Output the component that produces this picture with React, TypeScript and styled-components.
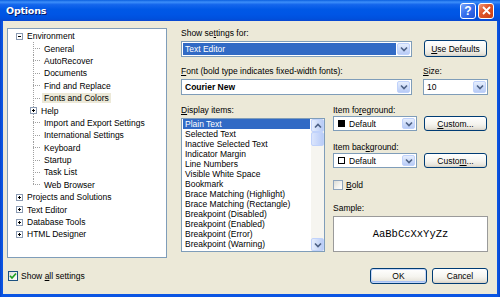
import React from "react";
import styled, { createGlobalStyle } from "styled-components";

const GlobalStyle = createGlobalStyle`
  html, body {
    margin: 0;
    padding: 0;
    background: #ffffff;
  }
  body {
    font-family: "Liberation Sans", Arial, sans-serif;
    font-size: 8.5px;
    color: #000;
  }
`;

// tree content
type TreeItem = {
  label: string;
  level: 0 | 1;
  expander?: "plus" | "minus";
  selected?: boolean;
  last?: boolean;
};

const treeItems: TreeItem[] = [
  { label: "Environment", level: 0, expander: "minus" },
  { label: "General", level: 1 },
  { label: "AutoRecover", level: 1 },
  { label: "Documents", level: 1 },
  { label: "Find and Replace", level: 1 },
  { label: "Fonts and Colors", level: 1, selected: true },
  { label: "Help", level: 1, expander: "plus" },
  { label: "Import and Export Settings", level: 1 },
  { label: "International Settings", level: 1 },
  { label: "Keyboard", level: 1 },
  { label: "Startup", level: 1 },
  { label: "Task List", level: 1 },
  { label: "Web Browser", level: 1, last: true },
  { label: "Projects and Solutions", level: 0, expander: "plus" },
  { label: "Text Editor", level: 0, expander: "plus" },
  { label: "Database Tools", level: 0, expander: "plus" },
  { label: "HTML Designer", level: 0, expander: "plus" },
];

const displayItems = [
  "Plain Text",
  "Selected Text",
  "Inactive Selected Text",
  "Indicator Margin",
  "Line Numbers",
  "Visible White Space",
  "Bookmark",
  "Brace Matching (Highlight)",
  "Brace Matching (Rectangle)",
  "Breakpoint (Disabled)",
  "Breakpoint (Enabled)",
  "Breakpoint (Error)",
  "Breakpoint (Warning)",
];

function Expander({ kind }: { kind: "plus" | "minus" }) {
  return (
    <ExpanderBox width="7" height="7" viewBox="0 0 7 7">
      <rect x="0.5" y="0.5" width="6" height="6" fill="#fff" stroke="#8b9bb3" />
      <path d="M2 3.5h3" stroke="#000" />
      {kind === "plus" && <path d="M3.5 2v3" stroke="#000" />}
    </ExpanderBox>
  );
}

function Chevron({ up }: { up?: boolean }) {
  return (
    <svg width="8" height="6" viewBox="0 0 8 6">
      <path
        d={up ? "M1 4.5 L4 1.5 L7 4.5" : "M1 1.5 L4 4.5 L7 1.5"}
        fill="none"
        stroke="#4d6185"
        strokeWidth="1.6"
      />
    </svg>
  );
}

function ComboBox({
  width,
  height,
  children,
  highlighted,
}: {
  width: number;
  height: number;
  children: React.ReactNode;
  highlighted?: boolean;
}) {
  return (
    <Combo $width={width} $height={height}>
      <ComboValue $highlighted={highlighted}>{children}</ComboValue>
      <DropButton>
        <Chevron />
      </DropButton>
    </Combo>
  );
}

export default function App() {
  return (
    <>
      <GlobalStyle />
      <Window>
        <TitleBar>
          <TitleText>Options</TitleText>
          <CaptionButton $variant="help">?</CaptionButton>
          <CaptionButton $variant="close">
            <svg width="9" height="9" viewBox="0 0 9 9">
              <path d="M1 1 L8 8 M8 1 L1 8" stroke="#fff" strokeWidth="1.8" />
            </svg>
          </CaptionButton>
        </TitleBar>

        <Body>
          <Main>
            <Tree>
              {treeItems.map((item) => (
                <TreeRow key={item.label} $level={item.level} $last={item.last}>
                  {item.expander ? (
                    <Expander kind={item.expander} />
                  ) : (
                    <Connector />
                  )}
                  <TreeLabel $selected={item.selected}>{item.label}</TreeLabel>
                </TreeRow>
              ))}
            </Tree>

            <RightPanel>
              <Row>
                <Field>
                  <Label>
                    Show se<u>t</u>tings for:
                  </Label>
                  <ComboBox width={231} height={16} highlighted>
                    Text Editor
                  </ComboBox>
                </Field>
                <PushButton $width={63} $height={17} $gap={12}>
                  <u>U</u>se Defaults
                </PushButton>
              </Row>

              <Row $top={9}>
                <Field>
                  <Label>
                    <u>F</u>ont (bold type indicates fixed-width fonts):
                  </Label>
                  <ComboBox width={231} height={16}>
                    <b>Courier New</b>
                  </ComboBox>
                </Field>
                <Field $gap={11}>
                  <Label>
                    <u>S</u>ize:
                  </Label>
                  <ComboBox width={65} height={16}>
                    10
                  </ComboBox>
                </Field>
              </Row>

              <Row $top={10}>
                <Field>
                  <Label>
                    <u>D</u>isplay items:
                  </Label>
                  <ListBox>
                    <ListItems>
                      {displayItems.map((text, i) => (
                        <ListItem key={text} $selected={i === 0}>
                          {text}
                        </ListItem>
                      ))}
                    </ListItems>
                    <ScrollBar>
                      <ScrollButton>
                        <Chevron up />
                      </ScrollButton>
                      <ScrollThumb />
                      <ScrollTrack />
                      <ScrollButton>
                        <Chevron />
                      </ScrollButton>
                    </ScrollBar>
                  </ListBox>
                </Field>

                <ColorColumn>
                  <Label>
                    Item fo<u>r</u>eground:
                  </Label>
                  <InlineRow>
                    <ComboBox width={84} height={15}>
                      <Swatch $color="#000" />
                      Default
                    </ComboBox>
                    <PushButton $width={63} $height={15} $gap={7}>
                      <u>C</u>ustom...
                    </PushButton>
                  </InlineRow>

                  <Label $top={11}>
                    Item bac<u>k</u>ground:
                  </Label>
                  <InlineRow>
                    <ComboBox width={84} height={15}>
                      <Swatch $color="#fff" />
                      Default
                    </ComboBox>
                    <PushButton $width={63} $height={15} $gap={7}>
                      Custo<u>m</u>...
                    </PushButton>
                  </InlineRow>

                  <CheckRow $top={12}>
                    <CheckBox $pale />
                    <span>
                      <u>B</u>old
                    </span>
                  </CheckRow>

                  <Label $top={13}>Sample:</Label>
                  <SampleBox>AaBbCcXxYyZz</SampleBox>
                </ColorColumn>
              </Row>
            </RightPanel>
          </Main>

          <Footer>
            <CheckRow>
              <CheckBox>
                <svg width="8" height="8" viewBox="0 0 8 8">
                  <path
                    d="M1 3.8 L3 6 L7 1.5"
                    fill="none"
                    stroke="#21a121"
                    strokeWidth="1.7"
                  />
                </svg>
              </CheckBox>
              <span>
                Show <u>a</u>ll settings
              </span>
            </CheckRow>
            <FooterButtons>
              <PushButton $width={57} $height={16} $default>
                OK
              </PushButton>
              <PushButton $width={56} $height={16}>
                Cancel
              </PushButton>
            </FooterButtons>
          </Footer>
        </Body>
      </Window>
    </>
  );
}

const Window = styled.div`
  width: 500px;
  height: 297px;
  display: flex;
  flex-direction: column;
  background: linear-gradient(to right, #0843c9 0, #0a55e3 2px, #0a55e3 calc(100% - 2px), #0843c9 100%);
  box-sizing: border-box;
  overflow: hidden;
`;

const TitleBar = styled.div`
  height: 21px;
  display: flex;
  align-items: center;
  padding: 0 6px 0 6px;
  gap: 2px;
  background: linear-gradient(
    to bottom,
    #0a5fdf 0%,
    #3d8ffa 10%,
    #1466ec 22%,
    #0058e6 45%,
    #0055e5 70%,
    #0050dc 90%,
    #0a46d0 100%
  );
`;

const TitleText = styled.div`
  flex: 1;
  color: #fff;
  font-family: "DejaVu Sans", "Liberation Sans", sans-serif;
  font-weight: bold;
  font-size: 9.5px;
  text-shadow: 1px 1px 0 #0a1e6a;
  letter-spacing: -0.2px;
`;

const CaptionButton = styled.div<{ $variant: "help" | "close" }>`
  width: 14px;
  height: 14px;
  border: 1px solid #fff;
  border-radius: 3px;
  display: flex;
  align-items: center;
  justify-content: center;
  color: #fff;
  font-family: "Liberation Sans", Arial, sans-serif;
  font-weight: bold;
  font-size: 12px;
  background: ${(p) =>
    p.$variant === "close"
      ? "linear-gradient(135deg, #f09678 0%, #e0582c 40%, #c73d12 100%)"
      : "linear-gradient(135deg, #7aa7fb 0%, #3a72ee 45%, #1c52d8 100%)"};
`;

const Body = styled.div`
  flex: 1;
  margin: 0 3px 3px 3px;
  background: #ece9d8;
  padding: 7px 9px 10px 4px;
  display: flex;
  flex-direction: column;
`;

const Main = styled.div`
  display: flex;
  gap: 14px;
  height: 230px;
`;

const Tree = styled.div`
  width: 160px;
  height: 230px;
  box-sizing: border-box;
  border: 1px solid #7f9db9;
  background: #fff;
  padding-top: 1px;
  overflow: hidden;
`;

const TreeRow = styled.div<{ $level: 0 | 1; $last?: boolean }>`
  position: relative;
  height: 12.4px;
  display: flex;
  align-items: center;
  padding-left: ${(p) => (p.$level === 0 ? 8 : 22)}px;

  ${(p) =>
    p.$level === 1 &&
    `
    &::before {
      content: "";
      position: absolute;
      left: 25px;
      top: 0;
      width: 1px;
      height: ${p.$last ? "50%" : "100%"};
      background: repeating-linear-gradient(to bottom, #a0a0a0 0 1px, transparent 1px 2px);
    }
  `}
`;

const ExpanderBox = styled.svg`
  position: relative;
  z-index: 1;
  flex-shrink: 0;
`;

const Connector = styled.div`
  width: 7px;
  height: 1px;
  margin-left: 3px;
  background: repeating-linear-gradient(to right, #a0a0a0 0 1px, transparent 1px 2px);
`;

const TreeLabel = styled.span<{ $selected?: boolean }>`
  margin-left: 2px;
  padding: 0 2px;
  line-height: 10px;
  white-space: nowrap;
  background: ${(p) => (p.$selected ? "#ece9d8" : "transparent")};
`;

const RightPanel = styled.div`
  width: 307px;
  display: flex;
  flex-direction: column;
`;

const Row = styled.div<{ $top?: number }>`
  display: flex;
  align-items: flex-end;
  margin-top: ${(p) => p.$top || 0}px;
`;

const Field = styled.div<{ $gap?: number }>`
  display: flex;
  flex-direction: column;
  margin-left: ${(p) => p.$gap || 0}px;
`;

const Label = styled.div<{ $top?: number }>`
  line-height: 11px;
  height: 11px;
  margin-bottom: 2px;
  margin-top: ${(p) => p.$top || 0}px;
  white-space: nowrap;
`;

const Combo = styled.div<{ $width: number; $height: number }>`
  width: ${(p) => p.$width}px;
  height: ${(p) => p.$height}px;
  box-sizing: border-box;
  border: 1px solid #7f9db9;
  background: #fff;
  display: flex;
  padding: 1px;
  gap: 1px;
`;

const ComboValue = styled.div<{ $highlighted?: boolean }>`
  flex: 1;
  display: flex;
  align-items: center;
  padding-left: 2px;
  white-space: nowrap;
  overflow: hidden;
  background: ${(p) => (p.$highlighted ? "#316ac5" : "transparent")};
  color: ${(p) => (p.$highlighted ? "#fff" : "#000")};
`;

const DropButton = styled.div`
  width: 13px;
  box-sizing: border-box;
  border: 1px solid #c0d2fb;
  border-radius: 2px;
  background: linear-gradient(to bottom, #e6eefd 0%, #cbdaf9 60%, #b8cbf6 100%);
  display: flex;
  align-items: center;
  justify-content: center;
`;

const Swatch = styled.span<{ $color: string }>`
  width: 7px;
  height: 7px;
  box-sizing: border-box;
  border: 1px solid #000;
  background: ${(p) => p.$color};
  margin: 0 4px 0 1px;
  flex-shrink: 0;
`;

const PushButton = styled.div<{
  $width: number;
  $height: number;
  $gap?: number;
  $default?: boolean;
}>`
  width: ${(p) => p.$width}px;
  height: ${(p) => p.$height}px;
  margin-left: ${(p) => p.$gap || 0}px;
  box-sizing: border-box;
  border: 1px solid #003c74;
  border-radius: 3px;
  background: linear-gradient(to bottom, #ffffff 0%, #f5f4ef 55%, #e8e5dc 85%, #d6d0c5 100%);
  display: flex;
  align-items: center;
  justify-content: center;
  white-space: nowrap;
  flex-shrink: 0;
  box-shadow: ${(p) =>
    p.$default ? "inset 0 0 0 1px #c4d6f9, inset 0 -1px 0 1px #a6c0f3" : "none"};
`;

const ListBox = styled.div`
  width: 144px;
  height: 134px;
  box-sizing: border-box;
  border: 1px solid #7f9db9;
  background: #fff;
  display: flex;
`;

const ListItems = styled.div`
  flex: 1;
  padding: 0 1px;
  overflow: hidden;
`;

const ListItem = styled.div<{ $selected?: boolean }>`
  height: 10px;
  line-height: 10px;
  padding-left: 2px;
  white-space: nowrap;
  background: ${(p) => (p.$selected ? "#316ac5" : "transparent")};
  color: ${(p) => (p.$selected ? "#fff" : "#000")};
`;

const ScrollBar = styled.div`
  width: 13px;
  display: flex;
  flex-direction: column;
  background: #f5f4ef;
`;

const ScrollButton = styled.div`
  height: 13px;
  box-sizing: border-box;
  border: 1px solid #c0d2fb;
  border-radius: 2px;
  background: linear-gradient(to right, #e6eefd 0%, #cbdaf9 60%, #b8cbf6 100%);
  display: flex;
  align-items: center;
  justify-content: center;
`;

const ScrollThumb = styled.div`
  height: 14px;
  box-sizing: border-box;
  border: 1px solid #c0d2fb;
  border-radius: 2px;
  background: linear-gradient(to right, #dbe5fc 0%, #c6d6fa 60%, #b9ccf7 100%);
`;

const ScrollTrack = styled.div`
  flex: 1;
  background: #f6f5f0;
`;

const ColorColumn = styled.div`
  margin-left: 8px;
  width: 155px;
  display: flex;
  flex-direction: column;
  align-self: stretch;
`;

const InlineRow = styled.div`
  display: flex;
  margin-top: -2px;
`;

const CheckRow = styled.div<{ $top?: number }>`
  display: flex;
  align-items: center;
  gap: 3px;
  height: 10px;
  margin-top: ${(p) => p.$top || 0}px;
  white-space: nowrap;
`;

const CheckBox = styled.div<{ $pale?: boolean }>`
  width: 10px;
  height: 10px;
  box-sizing: border-box;
  border: 1px solid ${(p) => (p.$pale ? "#8fa5bd" : "#1c5180")};
  background: linear-gradient(135deg, #dcdcd5 0%, #f4f4f0 60%, #ffffff 100%);
  display: flex;
  align-items: center;
  justify-content: center;
`;

const SampleBox = styled.div`
  height: 36px;
  box-sizing: border-box;
  border: 1px solid #9a9a9a;
  background: #fff;
  display: flex;
  align-items: center;
  justify-content: center;
  font-family: "Liberation Mono", "Courier New", monospace;
  font-size: 10.5px;
`;

const Footer = styled.div`
  margin-top: 10px;
  height: 16px;
  display: flex;
  align-items: center;
  justify-content: space-between;
  padding-left: 1px;
`;

const FooterButtons = styled.div`
  display: flex;
  gap: 5px;
`;
